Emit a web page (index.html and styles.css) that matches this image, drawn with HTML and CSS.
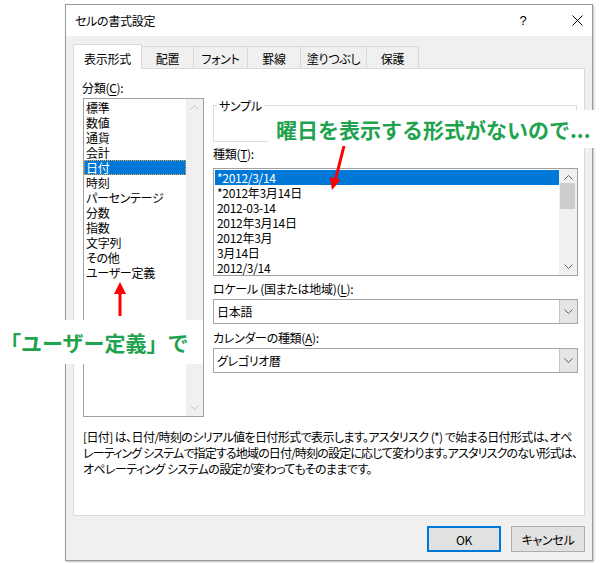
FILE: index.html
```html
<!DOCTYPE html>
<html lang="ja">
<head>
<meta charset="utf-8">
<title>セルの書式設定</title>
<link rel="stylesheet" href="styles.css">
</head>
<body>
<div class="stage">
  <div class="dialog">
    <div class="titlebar">
      <span class="title">セルの書式設定</span>
      <span class="help">?</span>
      <span class="close"><svg width="11" height="11" viewBox="0 0 11 11"><path d="M0.5 0.5 L10.5 10.5 M10.5 0.5 L0.5 10.5" stroke="#000" stroke-width="1" fill="none"/></svg></span>
    </div>
    <div class="tabs">
      <div class="tab active w1">表示形式</div>
      <div class="tab w2">配置</div>
      <div class="tab w3">フォント</div>
      <div class="tab w4">罫線</div>
      <div class="tab w5">塗りつぶし</div>
      <div class="tab w6">保護</div>
    </div>
    <div class="panel">
      <div class="cols">
        <div class="left">
          <div class="label">分類(<u>C</u>):</div>
          <div class="listbox catlist">
            <div class="items">
              <div class="item">標準</div>
              <div class="item">数値</div>
              <div class="item">通貨</div>
              <div class="item">会計</div>
              <div class="item selected focus">日付</div>
              <div class="item">時刻</div>
              <div class="item">パーセンテージ</div>
              <div class="item">分数</div>
              <div class="item">指数</div>
              <div class="item">文字列</div>
              <div class="item">その他</div>
              <div class="item">ユーザー定義</div>
            </div>
            <div class="vscroll disabled">
              <svg class="chev" width="9" height="5" viewBox="0 0 9 5"><polyline points="0.5,4.5 4.5,0.5 8.5,4.5" fill="none" stroke="#c4c4c4"/></svg>
              <svg class="chev" width="9" height="5" viewBox="0 0 9 5"><polyline points="0.5,0.5 4.5,4.5 8.5,0.5" fill="none" stroke="#c4c4c4"/></svg>
            </div>
          </div>
        </div>
        <div class="right">
          <fieldset class="sample"><legend>サンプル</legend></fieldset>
          <div class="label gap-a">種類(<u>T</u>):</div>
          <div class="listbox typelist">
            <div class="items">
              <div class="item selected">*2012/3/14</div>
              <div class="item">*2012年3月14日</div>
              <div class="item">2012-03-14</div>
              <div class="item">2012年3月14日</div>
              <div class="item">2012年3月</div>
              <div class="item">3月14日</div>
              <div class="item">2012/3/14</div>
            </div>
            <div class="vscroll">
              <svg class="chev" width="9" height="5" viewBox="0 0 9 5"><polyline points="0.5,4.5 4.5,0.5 8.5,4.5" fill="none" stroke="#606060"/></svg>
              <div class="track"><div class="thumb"></div></div>
              <svg class="chev" width="9" height="5" viewBox="0 0 9 5"><polyline points="0.5,0.5 4.5,4.5 8.5,0.5" fill="none" stroke="#606060"/></svg>
            </div>
          </div>
          <div class="label gap-b">ロケール (国または地域)(<u>L</u>):</div>
          <div class="combo">
            <span class="val">日本語</span>
            <span class="drop"><svg width="9" height="5" viewBox="0 0 9 5"><polyline points="0.5,0.5 4.5,4.5 8.5,0.5" fill="none" stroke="#606060"/></svg></span>
          </div>
          <div class="label gap-c">カレンダーの種類(<u>A</u>):</div>
          <div class="combo">
            <span class="val">グレゴリオ暦</span>
            <span class="drop"><svg width="9" height="5" viewBox="0 0 9 5"><polyline points="0.5,0.5 4.5,4.5 8.5,0.5" fill="none" stroke="#606060"/></svg></span>
          </div>
        </div>
      </div>
      <div class="desc">
        <div class="line">[日付] は、日付/時刻のシリアル値を日付形式で表示します。アスタリスク (*) で始まる日付形式は、オペ</div>
        <div class="line tight">レーティング システムで指定する地域の日付/時刻の設定に応じて変わります。アスタリスクのない形式は、</div>
        <div class="line">オペレーティング システムの設定が変わってもそのままです。</div>
      </div>
    </div>
    <div class="buttons">
      <button class="btn default">OK</button>
      <button class="btn">キャンセル</button>
    </div>
  </div>

  <div class="note note-custom">「ユーザー定義」で</div>
  <div class="note note-format">曜日を表示する形式がないので...</div>

  <svg class="arrow arrow-up" width="14" height="36" viewBox="0 0 14 36">
    <rect x="5.5" y="10" width="3" height="24" fill="#f00"/>
    <polygon points="7,0 1,12 13,12" fill="#f00"/>
  </svg>
  <svg class="arrow arrow-down" width="24" height="48" viewBox="0 0 24 48">
    <line x1="18" y1="2" x2="9.6" y2="35" stroke="#f00" stroke-width="3"/>
    <polygon points="6,46 3.85,32.97 14.47,35.87" fill="#f00"/>
  </svg>
</div>
</body>
</html>
```

FILE: styles.css
```css
html, body {
  margin: 0;
  padding: 0;
  background: #fff;
}

body {
  font-family: "Noto Sans CJK JP", "Noto Sans", sans-serif;
  font-size: 12px;
  color: #000;
  font-feature-settings: "palt";
  letter-spacing: -0.3px;
}

.stage {
  position: relative;
  width: 609px;
  height: 563px;
  padding: 4px 0 0 65px;
  box-sizing: border-box;
  overflow: hidden;
}

.dialog {
  width: 528px;
  height: 557px;
  box-sizing: border-box;
  border: 1px solid #9a9a9a;
  background: #f0f0f0;
  box-shadow: 1px 1px 2px rgba(0, 0, 0, 0.25);
  display: flex;
  flex-direction: column;
}

/* title bar */
.titlebar {
  height: 31px;
  flex: none;
  background: #fff;
  display: flex;
  align-items: center;
  padding-left: 9px;
  line-height: 31px;
}
.title { flex: 1; }
.help {
  width: 14px;
  margin-right: 33px;
  text-align: center;
  font-family: "Liberation Sans", sans-serif;
  font-size: 13px;
}
.close {
  width: 29px;
  display: flex;
  justify-content: center;
  align-items: center;
}

/* tabs */
.tabs {
  height: 32px;
  flex: none;
  display: flex;
  align-items: flex-end;
  padding-left: 7px;
}
.tab {
  height: 22px;
  box-sizing: border-box;
  border: 1px solid #d9d9d9;
  border-left: none;
  border-bottom: none;
  background: #f0f0f0;
  display: flex;
  align-items: center;
  justify-content: center;
  padding-top: 1px;
  white-space: nowrap;
}
.tab.active {
  height: 25px;
  margin-bottom: -1px;
  background: #fff;
  border-left: 1px solid #d9d9d9;
  position: relative;
  z-index: 1;
  padding-top: 2px;
}
.w1 { width: 69px; }
.w2 { width: 52px; }
.w3 { width: 54px; }
.w4 { width: 53px; }
.w5 { width: 66px; }
.w6 { width: 52px; }

/* panel */
.panel {
  margin: 0 7px;
  height: 448px;
  flex: none;
  box-sizing: border-box;
  border: 1px solid #d9d9d9;
  background: #fff;
}
.cols {
  display: flex;
  gap: 9px;
}
.left {
  width: 130px;
  box-sizing: border-box;
  padding: 11px 0 0 8px;
}
.right {
  width: 365px;
  padding-top: 29px;
}
.label {
  line-height: 15px;
  height: 15px;
  white-space: nowrap;
}
.label u { text-underline-offset: 2px; }

.listbox {
  box-sizing: border-box;
  border: 1px solid #a0a0a0;
  display: flex;
  background: #fff;
}
.items {
  flex: 1;
  min-width: 0;
  padding: 1px 0 0 1px;
}
.item {
  height: 15px;
  line-height: 15px;
  padding-left: 2px;
  white-space: nowrap;
  overflow: hidden;
}
.item.selected {
  background: #0078d7;
  color: #fff;
}
.item.focus {
  box-sizing: border-box;
  border: 1px dotted #f0a84a;
  line-height: 13px;
  padding-left: 1px;
}

.catlist {
  margin: 3px 0 0 1px;
  width: 121px;
  height: 319px;
}
.catlist .items { padding-left: 0; }

.vscroll {
  width: 17px;
  flex: none;
  background: #f0f0f0;
  display: flex;
  flex-direction: column;
  align-items: center;
  justify-content: space-between;
  padding: 6px 0 6px;
  box-sizing: border-box;
}
.typelist .vscroll {
  width: 18px;
  padding: 6px 0 6px;
}
.track {
  flex: 1;
  align-self: stretch;
  padding: 3px 2px 0 1px;
}
.thumb {
  height: 26px;
  background: #cdcdcd;
}

.sample {
  margin: 0;
  padding: 0;
  height: 44px;
  box-sizing: border-box;
  border: 1px solid #dcdcdc;
  min-width: 0;
  width: 364px;
}
.sample legend {
  padding: 0 2px;
  margin-left: 3px;
  line-height: 15px;
}

.gap-a { margin-top: 4px; }
.typelist {
  margin-top: 7px;
  height: 108px;
}
.gap-b { margin-top: 5px; }
.gap-c { margin-top: 6px; }

.combo {
  margin-top: 3px;
  height: 25px;
  box-sizing: border-box;
  border: 1px solid #a6a6a6;
  display: flex;
  background: #fff;
}
.combo .val {
  flex: 1;
  padding-left: 3px;
  line-height: 23px;
  white-space: nowrap;
}
.combo .drop {
  width: 17px;
  border-left: 1px solid #c4c4c4;
  background: #e5e5e5;
  display: flex;
  align-items: center;
  justify-content: center;
}

.desc {
  margin: 12px 0 0 9px;
  line-height: 16px;
  letter-spacing: -0.6px;
}
.desc .line { white-space: nowrap; }
.desc .line.tight { letter-spacing: -0.85px; }

/* buttons */
.buttons {
  display: flex;
  justify-content: flex-end;
  gap: 10px;
  padding: 10px 7px 0 0;
}
.btn {
  width: 74px;
  height: 26px;
  box-sizing: border-box;
  border: 1px solid #adadad;
  background: #e1e1e1;
  font-family: inherit;
  font-size: 12px;
  font-feature-settings: "palt";
  letter-spacing: -0.3px;
  color: #000;
  padding: 0;
  margin: 0;
}
.btn.default {
  border: 2px solid #0078d7;
}

/* annotations */
.note {
  position: absolute;
  background: #fff;
  color: #1fa34e;
  font-weight: 700;
  font-size: 21px;
  white-space: nowrap;
  font-feature-settings: normal;
  letter-spacing: 0;
}
.note-custom {
  left: 0;
  top: 320px;
  width: 203px;
  height: 44px;
  line-height: 44px;
}
.note-format {
  left: 268px;
  top: 110px;
  width: 341px;
  height: 38px;
  line-height: 38px;
  padding-left: 8px;
  box-sizing: border-box;
}
.arrow {
  position: absolute;
}
.arrow-up {
  left: 113px;
  top: 282px;
}
.arrow-down {
  left: 326px;
  top: 144px;
}
```
